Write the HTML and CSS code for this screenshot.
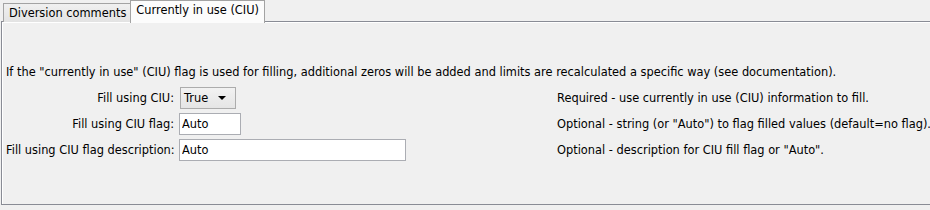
FILE: index.html
```html
<!DOCTYPE html>
<html lang="en">
<head>
    <meta charset="UTF-8">
    <title>Currently in use (CIU)</title>
    <link rel="stylesheet" href="styles.css">
</head>
<body>
    <div class="tabs">
        <div class="tab">Diversion comments</div>
        <div class="tab tab--active">Currently in use (CIU)</div>
    </div>

    <div class="panel">
        <p class="intro">If the "currently in use" (CIU) flag is used for filling, additional zeros will be added and limits are recalculated a specific way (see documentation).</p>

        <div class="form-grid">
            <label class="form-label">Fill using CIU:</label>
            <div class="form-control">
                <div class="combo">
                    <span class="combo__value">True</span>
                    <span class="combo__arrow"></span>
                </div>
            </div>
            <div class="form-help">Required - use currently in use (CIU) information to fill.</div>

            <label class="form-label">Fill using CIU flag:</label>
            <div class="form-control">
                <input class="field field--short" type="text" value="Auto">
            </div>
            <div class="form-help">Optional - string (or "Auto") to flag filled values (default=no flag).</div>

            <label class="form-label">Fill using CIU flag description:</label>
            <div class="form-control">
                <input class="field field--long" type="text" value="Auto">
            </div>
            <div class="form-help">Optional - description for CIU fill flag or "Auto".</div>
        </div>
    </div>
</body>
</html>
```

FILE: styles.css
```css
* {
    margin: 0;
    padding: 0;
    box-sizing: border-box;
}

body {
    background: #f0f0f0;
    font-family: "DejaVu Sans", Verdana, sans-serif;
    font-size: 11.4px;
    color: #000;
    overflow: hidden;
    white-space: nowrap;
}

.tabs {
    display: flex;
    align-items: flex-end;
    height: 22px;
    padding-left: 3px;
    position: relative;
    z-index: 1;
}

.tab {
    height: 19px;
    padding: 0 4px 0 5px;
    line-height: 18px;
    border: 1px solid #a3a3a3;
    border-bottom: none;
    background: linear-gradient(to bottom, #f0f0f0, #e3e3e3);
}

.tab--active {
    height: 23px;
    margin-bottom: -1px;
    margin-left: -1px;
    padding: 0 5px 0 5px;
    line-height: 19px;
    background: #fcfcfc;
    border-color: #a3a3a3;
}

.panel {
    height: 184px;
    margin-left: 1px;
    margin-top: -1px;
    border: 1px solid #898c95;
    border-right: none;
    box-shadow: inset 1px 1px 0 #fff;
    padding: 43px 0 0 4px;
}

.intro {
    line-height: 14px;
    margin-bottom: 8px;
}

.form-grid {
    display: grid;
    grid-template-columns: 171px 379px auto;
    grid-auto-rows: 22px;
    row-gap: 4px;
    align-items: center;
}

.form-label {
    text-align: right;
    padding-right: 3px;
}

.form-control {
    display: flex;
    align-items: center;
    padding-left: 2px;
}

.combo {
    display: flex;
    align-items: center;
    justify-content: space-between;
    width: 56px;
    height: 22px;
    margin-left: 1px;
    padding: 0 9px 0 3px;
    border: 1px solid #acacac;
    background: linear-gradient(to bottom, #f2f2f2, #e5e5e5);
}

.combo__arrow {
    width: 0;
    height: 0;
    border-left: 4px solid transparent;
    border-right: 4px solid transparent;
    border-top: 4px solid #000;
}

.field {
    height: 22px;
    border: 1px solid #abadb3;
    background: #fff;
    padding: 0 2px;
    font: inherit;
    color: #000;
    outline: none;
}

.field--short {
    width: 62px;
}

.field--long {
    width: 227px;
}

.form-help {
    padding-left: 1px;
}
```
